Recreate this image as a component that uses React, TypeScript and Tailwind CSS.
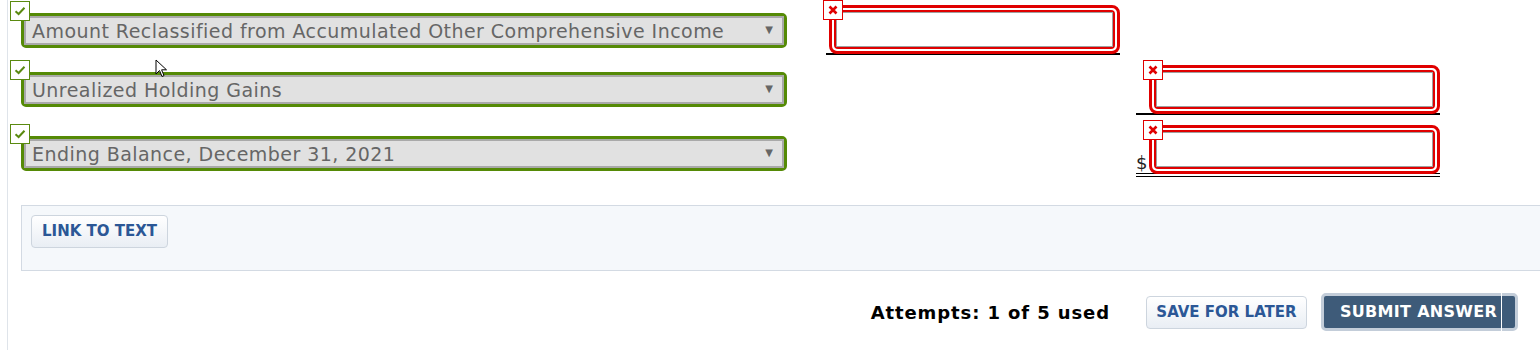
import React from "react";

const FONT = { fontFamily: '"DejaVu Sans", Verdana, sans-serif' };

function CheckBadge() {
  return (
    <span className="absolute left-[-14px] top-[-15px] flex h-[20px] w-[20px] items-center justify-center border border-[#5a8a10] bg-white">
      <svg width="12" height="10" viewBox="0 0 12 10">
        <path d="M1.5 5.2 L4.6 8 L10.5 1.8" fill="none" stroke="#5a8a10" strokeWidth="2" />
      </svg>
    </span>
  );
}

function WrongBadge() {
  return (
    <span className="absolute left-[-9px] top-[-8px] z-10 flex h-[20px] w-[20px] items-center justify-center border border-[#e00000] bg-white">
      <svg width="10" height="10" viewBox="0 0 10 10">
        <path d="M1.5 1.5 L8.5 8.5 M8.5 1.5 L1.5 8.5" stroke="#e00000" strokeWidth="2.6" />
      </svg>
    </span>
  );
}

function SelectField({ label }: { label: string }) {
  return (
    <div className="relative h-[35px] w-[766px] rounded-[5px] border-[3px] border-[#558a06]">
      <CheckBadge />
      <div className="flex h-full items-center justify-between border-2 border-[#a9a9a9] bg-[#e1e1e1] pl-[6px] pr-[9px] pt-[2px]">
        <span className="text-[19px] leading-none tracking-[0.45px] text-[#666666]" style={FONT}>
          {label}
        </span>
        <span className="mb-[3px] text-[10px] leading-none text-[#666666]">▼</span>
      </div>
    </div>
  );
}

function WrongInput() {
  return (
    <div className="relative h-[49px] w-[291px] rounded-[8px] border-[3px] border-[#e00000] bg-white p-[2px]">
      <WrongBadge />
      <div className="h-full rounded-[4px] border-2 border-[#e00000]">
        <div className="h-full border border-[#a0a0a0] bg-white" />
      </div>
    </div>
  );
}

function Cursor() {
  return (
    <svg className="absolute left-[155px] top-[59px]" width="13" height="20" viewBox="0 0 13 20">
      <path d="M1 1 L1 15 L4.5 11.5 L7 17.5 L9 16.6 L6.6 10.8 L11.5 10.8 Z" fill="white" stroke="black" strokeWidth="1" />
    </svg>
  );
}

export default function App() {
  return (
    <div className="relative h-[350px] w-[1540px] overflow-hidden bg-white" style={FONT}>
      <div className="ml-[7px] h-full border-l border-[#dfe4ea] pl-[13px]">
        {/* row 1 */}
        <div className="flex h-[58px] items-start">
          <div className="mt-[13px]">
            <SelectField label="Amount Reclassified from Accumulated Other Comprehensive Income" />
          </div>
          <div className="ml-[39px] mt-[5px] w-[294px] border-b-2 border-black pl-[3px]">
            <div className="mb-[-1px]">
              <WrongInput />
            </div>
          </div>
        </div>

        {/* row 2 */}
        <div className="flex h-[60px] items-start">
          <div className="mt-[14px]">
            <SelectField label="Unrealized Holding Gains" />
          </div>
          <div className="ml-[349px] mt-[7px] w-[304px] border-b-2 border-black pl-[13px]">
            <div className="mb-[-1px]">
              <WrongInput />
            </div>
          </div>
        </div>

        {/* row 3 */}
        <div className="flex h-[64px] items-start">
          <div className="mt-[18px]">
            <SelectField label="Ending Balance, December 31, 2021" />
          </div>
          <div className="ml-[349px] mt-[7px] flex w-[304px] items-end border-b-[4px] border-double border-black">
            <span className="mb-[1px] w-[13px] text-[18px] leading-none text-[#222]">$</span>
            <div className="mb-[-1px]">
              <WrongInput />
            </div>
          </div>
        </div>

        {/* link panel */}
        <div className="mt-[23px] h-[66px] w-[1540px] border border-[#d3dae3] bg-[#f5f8fb] pl-[9px] pt-[9px]">
          <button
            type="button"
            className="h-[33px] rounded-[4px] border border-[#cdd5de] bg-gradient-to-b from-white to-[#e9eef4] px-[10px] text-[15px] font-bold text-[#2b5796]"
          >
            LINK TO TEXT
          </button>
        </div>

        {/* footer */}
        <div className="mt-[22px] flex items-center justify-end pr-[22px]">
          <span className="text-[18px] font-bold tracking-[0.9px] text-black">Attempts: 1 of 5 used</span>
          <button
            type="button"
            className="ml-[36px] h-[33px] w-[161px] rounded-[4px] border border-[#cdd5de] bg-gradient-to-b from-white to-[#e9eef4] text-[15px] font-bold text-[#2b5796]"
          >
            SAVE FOR LATER
          </button>
          <button
            type="button"
            className="relative ml-[14px] h-[38px] w-[197px] rounded-[5px] border-[3px] border-[#c3cdd9] bg-[#3e5b79] pl-[2px] text-left text-[16px] font-bold tracking-[0.3px] text-white"
          >
            <span className="ml-[14px]">SUBMIT ANSWER</span>
            <span className="absolute right-[13px] top-[-3px] h-[38px] w-px bg-white" />
          </button>
        </div>
      </div>
      <Cursor />
    </div>
  );
}
